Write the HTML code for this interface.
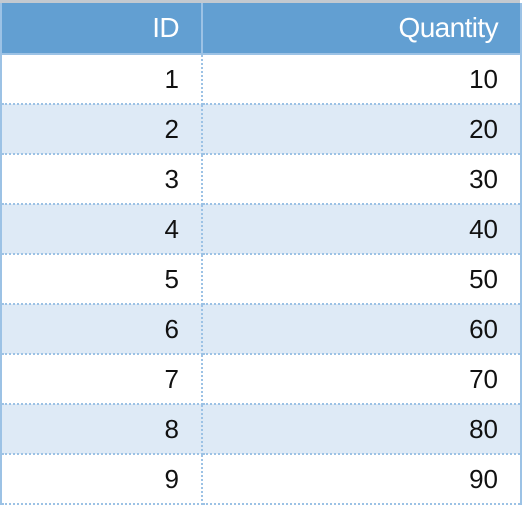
<!DOCTYPE html>
<html><head><style>
body{margin:0;width:524px;height:458px;overflow:hidden;background:#fff;font-family:"Liberation Sans",Arial,sans-serif;}
.top{position:absolute;left:0;top:0;width:520px;height:3px;background:#c3c9d0;}
.wrap{position:absolute;left:0;top:3px;width:518px;border-left:2px solid #9cc2e5;border-right:2px solid #9cc2e5;}
table{border-collapse:collapse;width:518px;table-layout:fixed;}
th{background:#629fd2;color:#fff;font-weight:normal;font-size:28px;height:51px;box-sizing:border-box;text-align:right;padding:0 22px 0 0;border-bottom:2px solid #9cc2e5;letter-spacing:-0.6px;}
th.id{width:200px;border-right:2px solid #9cc2e5;}
td{font-size:26px;color:#111;height:48px;padding:0 22px 0 0;text-align:right;border-bottom:2px dotted #9cc2e5;}
td.id{border-right:2px dotted #9cc2e5;}
tr.alt td{background:#deeaf6;}
</style></head><body>
<div class="top"></div>
<div class="wrap"><table>
<tr><th class="id">ID</th><th>Quantity</th></tr>
<tr><td class="id">1</td><td>10</td></tr>
<tr class="alt"><td class="id">2</td><td>20</td></tr>
<tr><td class="id">3</td><td>30</td></tr>
<tr class="alt"><td class="id">4</td><td>40</td></tr>
<tr><td class="id">5</td><td>50</td></tr>
<tr class="alt"><td class="id">6</td><td>60</td></tr>
<tr><td class="id">7</td><td>70</td></tr>
<tr class="alt"><td class="id">8</td><td>80</td></tr>
<tr><td class="id">9</td><td>90</td></tr>
</table></div>
</body></html>
